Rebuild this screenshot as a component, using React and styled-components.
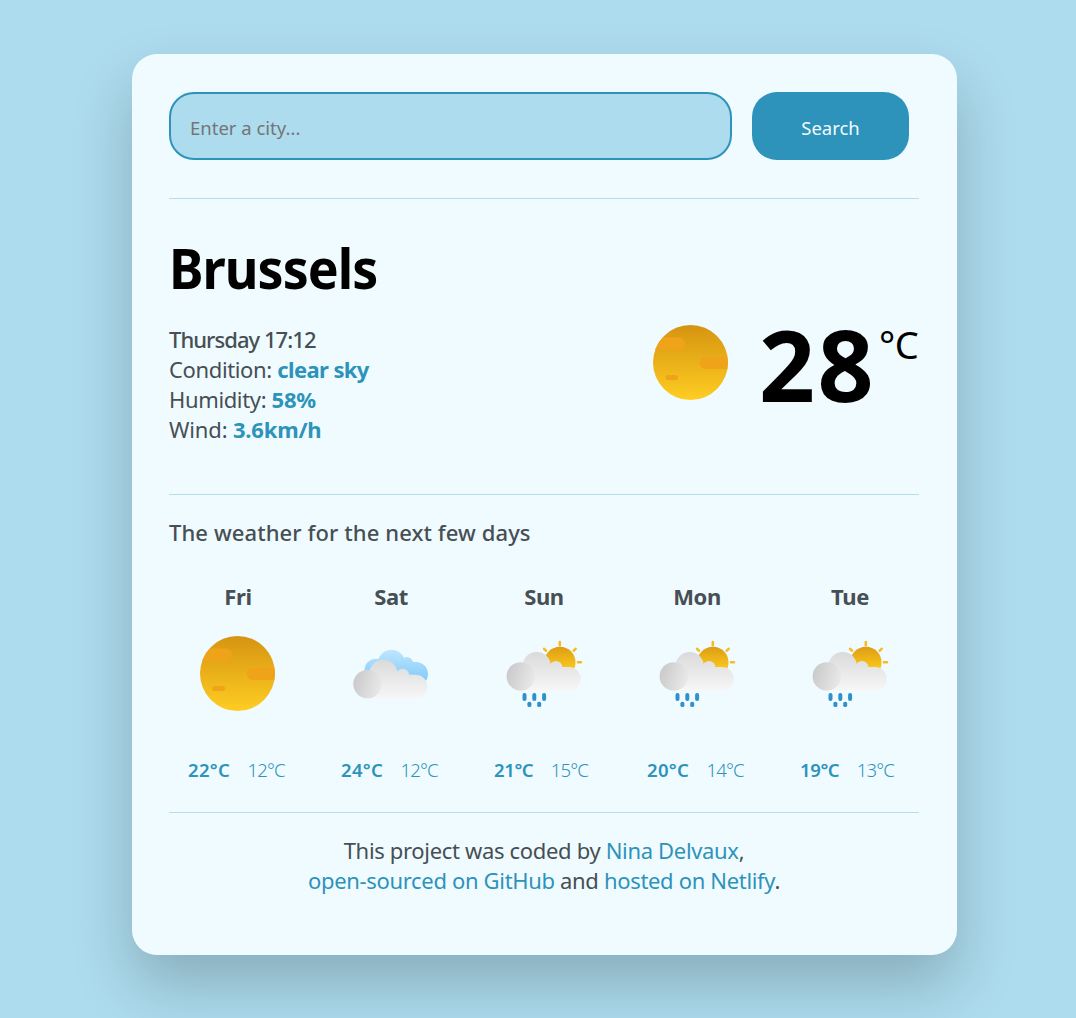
import React from "react";
import styled, { createGlobalStyle } from "styled-components";

const colors = {
  page: "#addcee",
  card: "#f0fbff",
  accent: "#2d93ba",
  text: "#464f54",
  line: "#b3dfec",
};

const GlobalStyle = createGlobalStyle`
  *, *::before, *::after { box-sizing: border-box; }
  body {
    margin: 0;
    min-height: 1018px;
    background: ${colors.page};
    color: ${colors.text};
    font-family: "Noto Sans", "Open Sans", sans-serif;
    font-size: 22px;
    line-height: 30px;
    overflow: hidden;
  }
`;

const Page = styled.div`
  display: flex;
  height: 1018px;
  padding: 54px 0 0 132px;
  align-items: flex-start;
`;

const Card = styled.main`
  width: 825px;
  height: 901px;
  padding: 38px 38px 0 37px;
  border-radius: 25px;
  background: ${colors.card};
  box-shadow: 0 30px 60px rgba(0, 0, 0, 0.21);
`;

const SearchForm = styled.form`
  display: flex;
  gap: 20px;
  margin: 0 10px 38px 0;
`;

const CityInput = styled.input`
  flex: 1;
  min-width: 0;
  height: 68px;
  padding: 2px 19px 0;
  border: 2px solid ${colors.accent};
  border-radius: 25px;
  background: ${colors.page};
  font: inherit;
  font-size: 18.5px;
  &::placeholder { color: #757575; opacity: 1; }
`;

const SearchButton = styled.button`
  width: 157px;
  height: 68px;
  padding: 4px 0 0;
  border: 0;
  border-radius: 25px;
  background: ${colors.accent};
  color: ${colors.card};
  font: inherit;
  font-size: 18.5px;
`;

const Divider = styled.hr`
  height: 1px;
  margin: 0;
  border: 0;
  background: ${colors.line};
`;

const City = styled.h1`
  margin: 35px 0 23px;
  color: #000;
  font-size: 55px;
  font-weight: 700;
  line-height: 67px;
  letter-spacing: -1px;
  transform: scaleX(0.943);
  transform-origin: left center;
`;

const Current = styled.section`
  display: flex;
  justify-content: space-between;
  height: 170px;
`;

const Facts = styled.ul`
  margin: 0;
  padding: 0;
  list-style: none;
`;

const Fact = styled.li`
  letter-spacing: ${(p) => p.$spacing || "-0.36px"};
  font-weight: ${(p) => p.$weight || 400};
`;

const Value = styled.strong`
  color: ${colors.accent};
  font-weight: 700;
  letter-spacing: ${(p) => p.$spacing || "-0.2px"};
`;

const Reading = styled.div`
  display: flex;
  align-items: flex-start;
  padding-top: 1px;
  color: #000;
`;

const Degrees = styled.span`
  margin-left: 31px;
  font-size: 98px;
  font-weight: 700;
  line-height: 78px;
  letter-spacing: 2.5px;
`;

const Unit = styled.span`
  width: 40px;
  margin-left: 3px;
  font-size: 38px;
  font-weight: 400;
  line-height: 38px;
  letter-spacing: -0.5px;
`;

const Subtitle = styled.h2`
  margin: 22px 0 34px;
  font-size: 22px;
  font-weight: 500;
  line-height: 30px;
  letter-spacing: 0.1px;
`;

const Forecast = styled.section`
  display: grid;
  grid-template-columns: repeat(5, 153px);
  margin: 0 -8px 27px;
`;

const Day = styled.article`
  display: flex;
  flex-direction: column;
  align-items: center;
`;

const DayName = styled.div`
  margin-bottom: 25px;
  padding-left: 1px;
  font-weight: 700;
  letter-spacing: -0.4px;
`;

const Temperatures = styled.div`
  display: flex;
  align-self: flex-start;
  gap: 17.4px;
  margin: 44px 0 0 27px;
  color: ${colors.accent};
  font-size: 18.5px;
`;

const High = styled.span`
  font-weight: 600;
  letter-spacing: ${(p) => (p.$narrow ? "-0.4px" : "0.3px")};
`;

const Low = styled.span`
  font-weight: 300;
  letter-spacing: -0.8px;
`;

const Footer = styled.footer`
  padding-top: 22px;
  text-align: center;
  letter-spacing: -0.33px;
`;

const FooterLink = styled.a`
  color: ${colors.accent};
`;

const Icon = styled.svg`
  display: block;
  width: 75px;
  height: 75px;
  flex: none;
  overflow: visible;
`;

function Gradients({ id }) {
  return (
    <defs>
      <linearGradient id={id + "sun"} x1="0" y1="0" x2="0" y2="1">
        <stop offset="0" stopColor="#d69411" />
        <stop offset="1" stopColor="#fecd22" />
      </linearGradient>
      <linearGradient id={id + "halfsun"} x1="0" y1="0" x2="0" y2="1">
        <stop offset="0" stopColor="#dd9d13" />
        <stop offset="0.7" stopColor="#fac81f" />
      </linearGradient>
      <linearGradient id={id + "cloud"} gradientUnits="userSpaceOnUse" x1="0" y1="16" x2="0" y2="55">
        <stop offset="0" stopColor="#dadada" />
        <stop offset="1" stopColor="#f7f7f7" />
      </linearGradient>
      <linearGradient id={id + "puff"} x1="0" y1="0.3" x2="1" y2="0.6">
        <stop offset="0" stopColor="#c9c9c9" />
        <stop offset="1" stopColor="#e9e9e9" />
      </linearGradient>
      <linearGradient id={id + "sky"} gradientUnits="userSpaceOnUse" x1="0" y1="14" x2="0" y2="52">
        <stop offset="0" stopColor="#bfe5ff" />
        <stop offset="1" stopColor="#74c5f7" />
      </linearGradient>
      <clipPath id={id + "disc"}>
        <circle cx="37.5" cy="37.5" r="37.5" />
      </clipPath>
    </defs>
  );
}

function FrontCloud({ id }) {
  return (
    <>
      <g fill={`url(#${id}cloud)`}>
        <circle cx="30.2" cy="30" r="14" />
        <circle cx="49.4" cy="31.4" r="6.4" />
        <path d="M14 32H49.4V31H62.4a11.85 11.85 0 0 1 0 23.7H14Z" />
      </g>
      <circle cx="14.3" cy="40.4" r="14.2" fill={`url(#${id}puff)`} />
    </>
  );
}

function ClearIcon({ id }) {
  return (
    <Icon viewBox="0 0 75 75" aria-hidden="true">
      <Gradients id={id} />
      <circle cx="37.5" cy="37.5" r="37.5" fill={`url(#${id}sun)`} />
      <g clipPath={`url(#${id}disc)`} fill="#efa318">
        <rect x="-6" y="12.6" width="38" height="12.4" rx="6" />
        <rect x="46.7" y="31.6" width="38" height="12.4" rx="6" />
        <rect x="12.4" y="50" width="12.6" height="5" rx="2.5" />
      </g>
    </Icon>
  );
}

function CloudsIcon({ id }) {
  return (
    <Icon viewBox="0 0 75 75" aria-hidden="true">
      <Gradients id={id} />
      <g fill={`url(#${id}sky)`}>
        <circle cx="38.5" cy="27.5" r="13.7" />
        <circle cx="23" cy="34.2" r="11.5" />
        <circle cx="53.7" cy="27.4" r="6.4" />
        <path d="M24 28H53.7V26H63a12 12 0 0 1 0 24H24Z" />
      </g>
      <g transform="translate(0.2 7.7)">
        <FrontCloud id={id} />
      </g>
    </Icon>
  );
}

function RainIcon({ id }) {
  return (
    <Icon viewBox="0 0 75 75" aria-hidden="true">
      <Gradients id={id} />
      <g transform="translate(0.5 0)">
        <circle cx="53.4" cy="26.4" r="15.6" fill={`url(#${id}halfsun)`} />
        <path
          d="M53.3 6v3.2M71.5 26.3h3M67.3 14.7l1.8-1.9M39.4 14.7l-1.8-1.9"
          stroke="#f8bb22"
          strokeWidth="2.6"
          strokeLinecap="round"
        />
        <FrontCloud id={id} />
        <g fill="#3090cb">
          <rect x="16" y="57" width="4" height="8" rx="1.9" />
          <rect x="25.8" y="57" width="4" height="8" rx="1.9" />
          <rect x="35.6" y="57" width="4" height="8" rx="1.9" />
          <rect x="20.9" y="65.7" width="4" height="5.4" rx="1.9" />
          <rect x="30.7" y="65.7" width="4" height="5.4" rx="1.9" />
        </g>
      </g>
    </Icon>
  );
}

const days = [
  { name: "Fri", icon: ClearIcon, high: 22, low: 12 },
  { name: "Sat", icon: CloudsIcon, high: 24, low: 12 },
  { name: "Sun", icon: RainIcon, high: 21, low: 15 },
  { name: "Mon", icon: RainIcon, high: 20, low: 14 },
  { name: "Tue", icon: RainIcon, high: 19, low: 13 },
];

export default function App() {
  return (
    <>
      <GlobalStyle />
      <Page>
        <Card>
          <SearchForm onSubmit={(e) => e.preventDefault()}>
            <CityInput type="text" placeholder="Enter a city..." />
            <SearchButton type="submit">Search</SearchButton>
          </SearchForm>
          <Divider />
          <City>Brussels</City>
          <Current>
            <Facts>
              <Fact $weight={500} $spacing="-0.95px">Thursday 17:12</Fact>
              <Fact>Condition: <Value $spacing="-0.6px">clear sky</Value></Fact>
              <Fact>Humidity: <Value>58%</Value></Fact>
              <Fact $spacing="-0.15px">Wind: <Value>3.6km/h</Value></Fact>
            </Facts>
            <Reading>
              <ClearIcon id="now" />
              <Degrees>28</Degrees>
              <Unit>°C</Unit>
            </Reading>
          </Current>
          <Divider />
          <Subtitle>The weather for the next few days</Subtitle>
          <Forecast>
            {days.map(({ name, icon: DayIcon, high, low }) => (
              <Day key={name}>
                <DayName>{name}</DayName>
                <DayIcon id={name} />
                <Temperatures>
                  <High $narrow={String(high).includes("1")}>{high}°C</High>
                  <Low>{low}°C</Low>
                </Temperatures>
              </Day>
            ))}
          </Forecast>
          <Divider />
          <Footer>
            This project was coded by <FooterLink>Nina Delvaux</FooterLink>,
            <br />
            <FooterLink>open-sourced on GitHub</FooterLink> and{" "}
            <FooterLink>hosted on Netlify</FooterLink>.
          </Footer>
        </Card>
      </Page>
    </>
  );
}
